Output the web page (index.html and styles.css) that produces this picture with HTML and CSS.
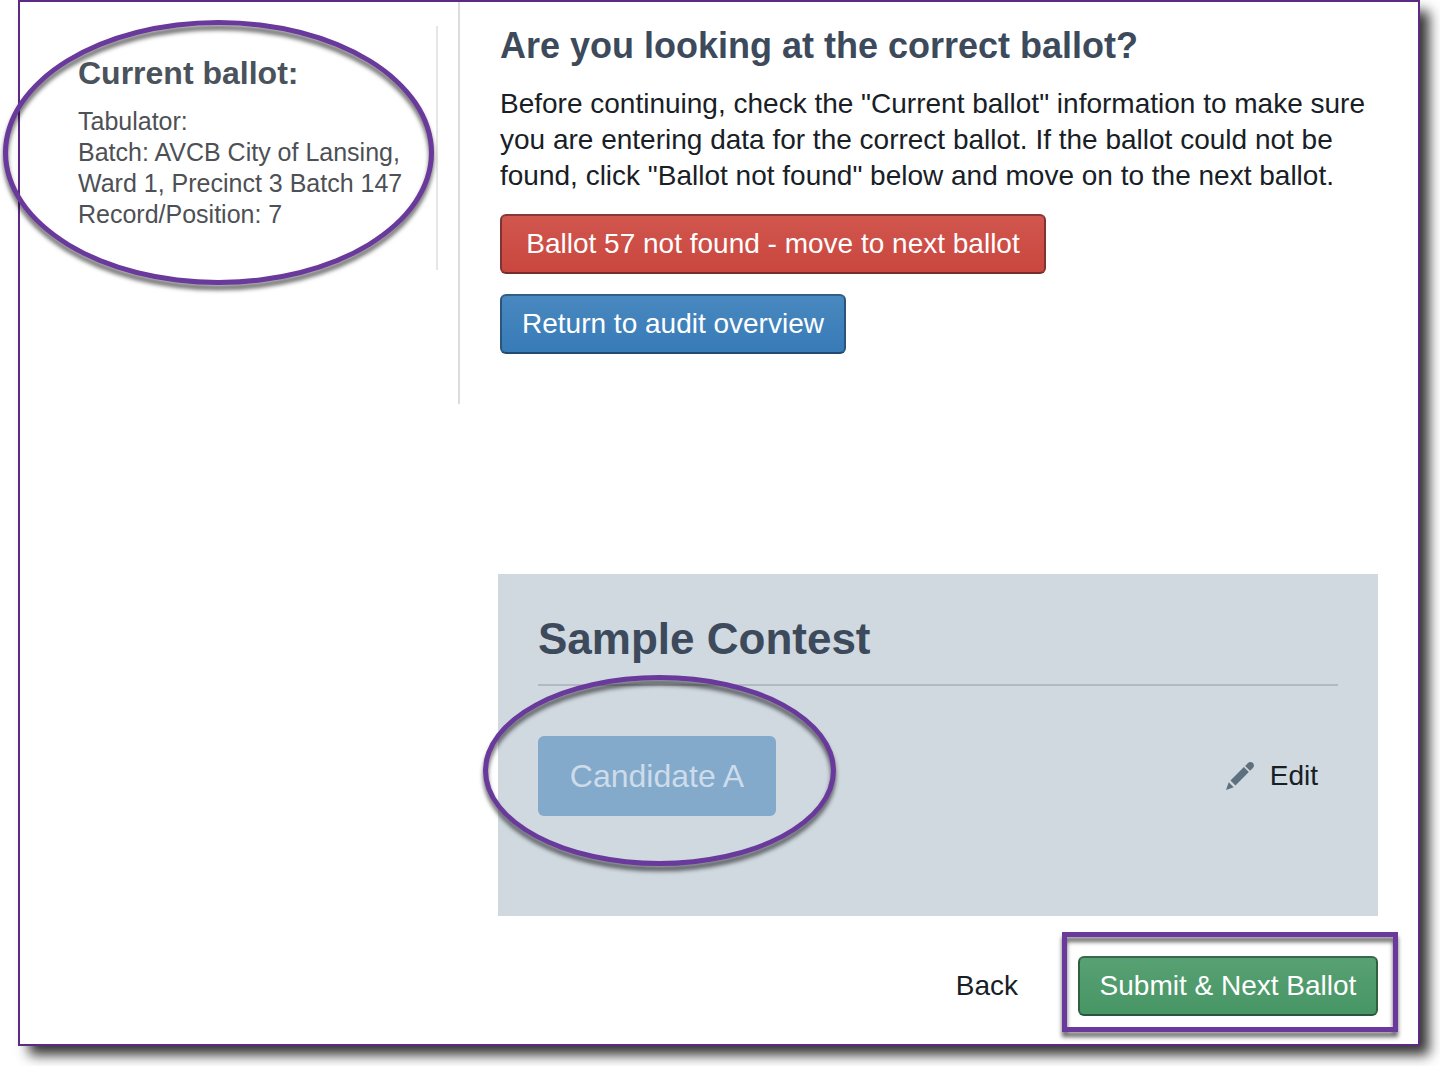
FILE: index.html
```html
<!DOCTYPE html>
<html lang="en">
<head>
    <meta charset="UTF-8">
    <title>Audit board - ballot 57</title>
    <link rel="stylesheet" href="styles.css">
</head>
<body>

<div class="frame">
    <div class="top">
        <aside class="sidebar">
            <div class="current-ballot">
                <h2>Current ballot:</h2>
                <p>Tabulator:</p>
                <p>Batch: AVCB City of Lansing, Ward 1, Precinct 3 Batch 147</p>
                <p>Record/Position: 7</p>
                <span class="mark mark-ballot"></span>
            </div>
        </aside>

        <main class="check">
            <h1>Are you looking at the correct ballot?</h1>
            <p>Before continuing, check the "Current ballot" information to make sure you are entering data for the correct ballot. If the ballot could not be found, click "Ballot not found" below and move on to the next ballot.</p>
            <button type="button" class="button button-danger">Ballot 57 not found - move to next ballot</button>
            <button type="button" class="button button-primary">Return to audit overview</button>
        </main>
    </div>

    <form class="review">
        <section class="contest">
            <h2>Sample Contest</h2>
            <div class="choices">
                <div class="choice">
                    <button type="button" class="candidate" disabled>Candidate A</button>
                    <span class="mark mark-candidate"></span>
                </div>
                <button type="button" class="button button-minimal">
                    <svg class="icon" viewBox="0 0 16 16" aria-hidden="true">
                        <path d="M3.25 10.26l2.47 2.47 6.69-6.69-2.46-2.48-6.7 6.7zM.99 14.99l3.86-1.39-2.46-2.44L.99 15zm12.25-14c-.48 0-.92.2-1.24.51l-1.44 1.44 2.47 2.47 1.44-1.44c.32-.32.51-.75.51-1.24.01-.95-.77-1.74-1.74-1.74z"/>
                    </svg>
                    Edit
                </button>
            </div>
        </section>

        <div class="actions">
            <button type="button" class="button button-minimal">Back</button>
            <div class="submit">
                <button type="submit" class="button button-success">Submit &amp; Next Ballot</button>
                <span class="mark mark-submit"></span>
            </div>
        </div>
    </form>
</div>

</body>
</html>
```
FILE: styles.css
```css
* {
    box-sizing: border-box;
    margin: 0;
}

body {
    background-color: white;
    color: #182026;
    font: 28px/36px "Helvetica Neue", "Liberation Sans", Arial, sans-serif;
}

h1, h2 {
    color: #3c4a5b;
}

.frame {
    margin: 0 20px 20px 18px;
    padding-bottom: 28px;
    border: 2px solid #5c2a84;
    background-color: white;
    box-shadow: 10px 10px 12px -1px rgba(0, 0, 0, .8);
}

.top {
    display: grid;
    grid-template-columns: 440px 1fr;
}

/* left column */

.sidebar {
    padding: 24px 20px 134px 0;
    border-right: 2px solid #dcdcdc;
}

.current-ballot {
    position: relative;
    height: 100%;
    padding: 28px 16px 40px 58px;
    border-right: 2px solid #e6e6e6;
    color: #4d5054;
    font-size: 25px;
    line-height: 31px;
}

.current-ballot h2 {
    margin-bottom: 14px;
    color: #4a525b;
    font-size: 32px;
    line-height: 38px;
}

/* right column */

.check {
    display: flex;
    flex-direction: column;
    align-items: flex-start;
    gap: 20px;
    padding: 24px 36px 50px 40px;
}

.check h1 {
    font-size: 36px;
    line-height: 40px;
}

/* buttons */

.button {
    display: inline-flex;
    align-items: center;
    justify-content: center;
    height: 60px;
    padding: 0 18px;
    border: 2px solid transparent;
    border-radius: 6px;
    background: none;
    color: white;
    font: inherit;
    white-space: nowrap;
}

.button-danger {
    min-width: 546px;
    border-color: #87393a #7f3433 #742e2c;
    background: #cc4840 linear-gradient(#d1574f, #c9463e) border-box;
}

.button-primary {
    min-width: 346px;
    border-color: #325f87 #29557f #22496f;
    background: #3a7cb8 linear-gradient(#4a89c0, #367ab7) border-box;
}

.button-success {
    min-width: 300px;
    border-color: #38694d #30613f #285540;
    background: #4a9867 linear-gradient(#58a174, #479564) border-box;
}

.button-minimal {
    color: #182026;
}

.icon {
    width: 32px;
    height: 32px;
    margin-right: 14px;
    fill: #5c7080;
}

/* contest */

.review {
    margin: 170px 40px 0 478px;
}

.contest {
    padding: 40px 40px 100px;
    background-color: #d0d8e0;
}

.contest h2 {
    margin-bottom: 50px;
    padding-bottom: 20px;
    border-bottom: 2px solid #b1b9c2;
    font-size: 44px;
    line-height: 50px;
}

.choices {
    display: flex;
    align-items: center;
    justify-content: space-between;
}

.choice, .submit {
    position: relative;
}

.candidate {
    display: block;
    min-width: 238px;
    height: 80px;
    padding: 0 30px;
    border: 0;
    border-radius: 6px;
    background-color: #83a9cb;
    color: #cddcea;
    font: inherit;
    font-size: 32px;
}

.actions {
    display: flex;
    justify-content: flex-end;
    gap: 40px;
    margin-top: 40px;
}

/* purple callouts drawn over the page */

.mark {
    position: absolute;
    border: 5px solid #69399b;
    filter: drop-shadow(0 5px 2px rgba(0, 0, 0, .6));
    pointer-events: none;
}

.mark-ballot {
    top: -6px;
    right: 2px;
    bottom: -15px;
    left: -17px;
    border-radius: 50%;
}

.mark-candidate {
    inset: -61px -60px -50px -55px;
    border-radius: 50%;
}

.mark-submit {
    inset: -24px -20px -16px -16px;
}
```
